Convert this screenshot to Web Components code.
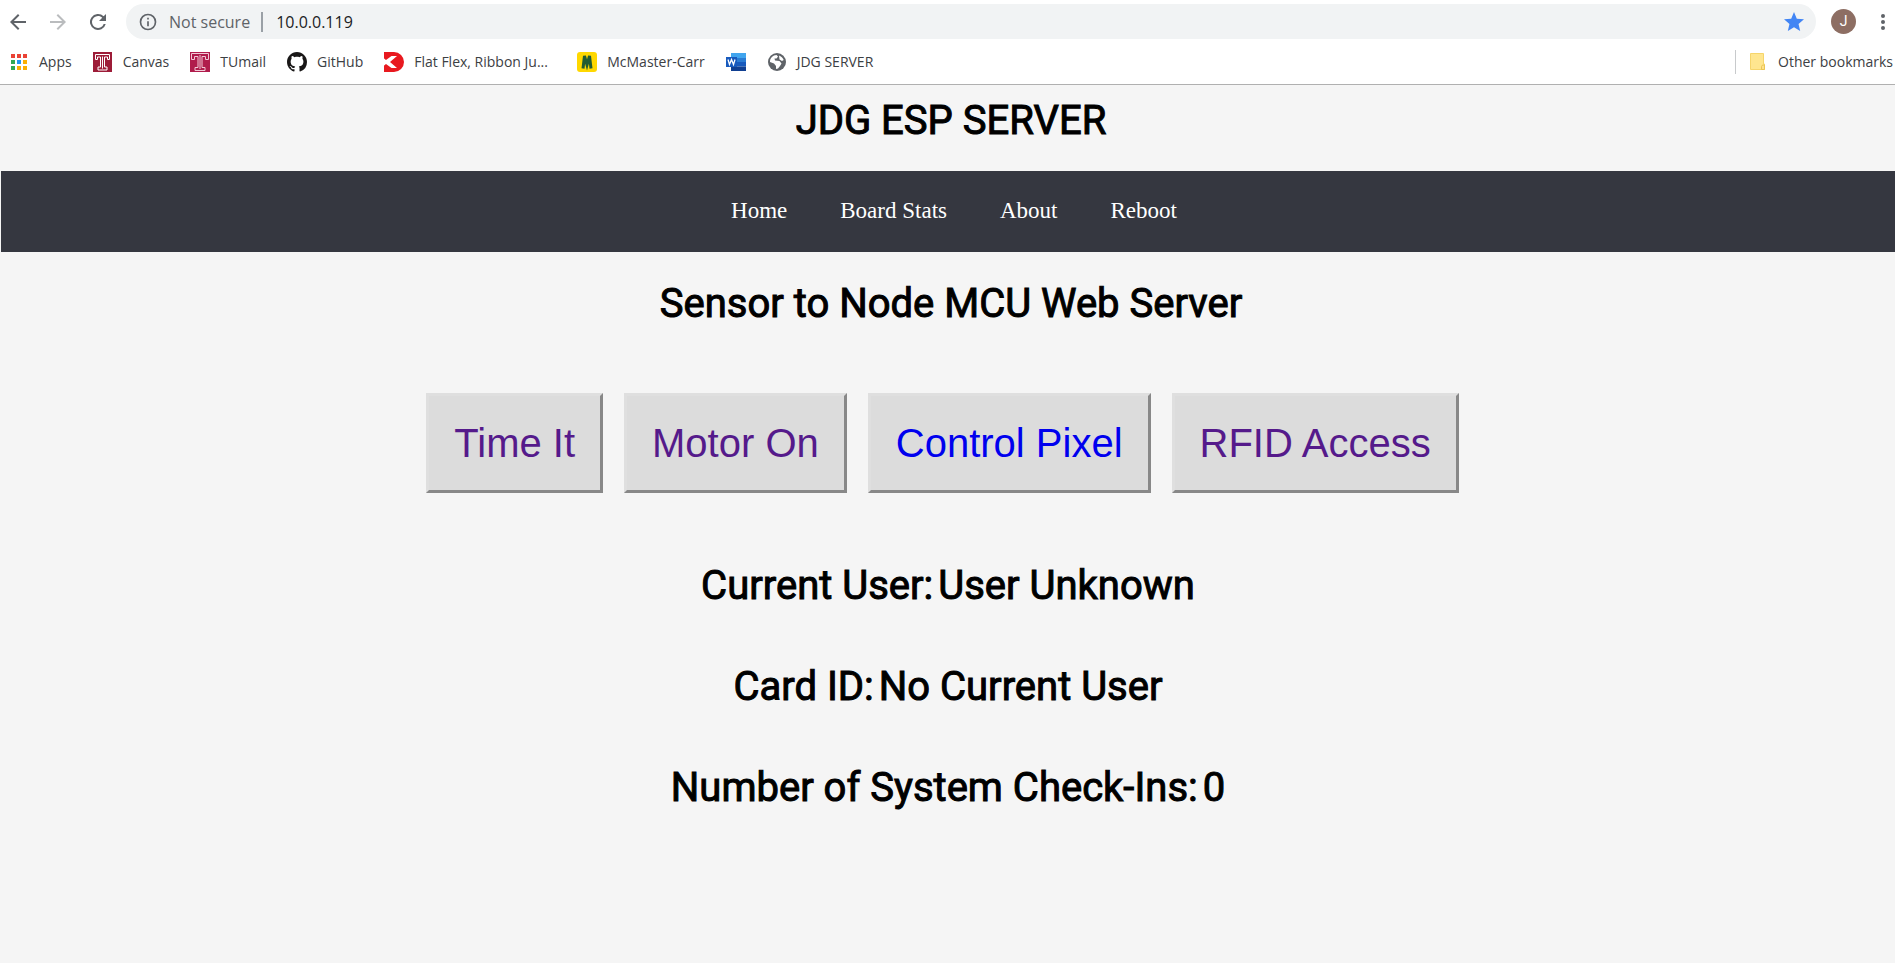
<!DOCTYPE html>
<html lang="en">
<head>
<meta charset="utf-8">
<title>JDG ESP SERVER</title>
<style>
html, body { height: 100%; margin: 0; }
body { background: #f5f5f5; }
</style>
</head>
<body>
<esp-app></esp-app>
<script>
const icons = {
  apps: '<svg viewBox="0 0 18 20"><g fill="#ea4335"><path d="M0 2h4v4H0zM6 2h4v4H6zM12 2h4v4h-4z"/></g><path fill="#34a853" d="M0 8h4v4H0zM0 14h4v4H0z"/><path fill="#2196f3" d="M6 8h4v4H6z"/><path fill="#fbb003" d="M12 8h4v4h-4zM6 14h4v4H6zM12 14h4v4h-4z"/></svg>',
  temple: '<svg viewBox="0 0 20 20"><path fill="#9d1c38" d="M0 0h19v20H0z"/><path fill="none" stroke="#fff" d="M2.500 7.500v-5h14v5h-2v-2.500h-3v10h2.500v3h-9v-3h2.500v-10h-3v2.500zM9.500 4.500v12"/></svg>',
  temple2: '<svg viewBox="0 0 20 20"><path fill="#b01c4c" d="M0 0h20v20H0z"/><path fill="none" stroke="#f1c9d6" d="M1.500 7.500v-6h17v6h-3v-3h-3.500v11h3v3H5v-3h3v-11H4.500v3zM10 3v14"/></svg>',
  github: '<svg viewBox="0 0 16 16"><path fill="#191717" d="M8 0C3.580 0 0 3.580 0 8c0 3.540 2.290 6.530 5.470 7.590.4.070.55-.17.55-.38 0-.19-.01-.82-.01-1.490-2.010.37-2.530-.49-2.690-.94-.09-.23-.48-.94-.82-1.130-.28-.15-.68-.52-.01-.53.63-.01 1.080.58 1.230.82.72 1.210 1.870.87 2.330.66.07-.52.28-.87.51-1.070-1.780-.2-3.640-.89-3.640-3.950 0-.87.31-1.590.82-2.150-.08-.2-.36-1.020.08-2.120 0 0 .67-.21 2.200.82.64-.18 1.320-.27 2-.27s1.360.09 2 .27c1.530-1.040 2.200-.82 2.200-.82.44 1.100.16 1.920.08 2.120.51.56.82 1.270.82 2.150 0 3.070-1.870 3.750-3.650 3.950.29.25.54.73.54 1.480 0 1.070-.01 1.930-.01 2.200 0 .21.15.46.55.38A8.010 8.010 0 0 0 16 8c0-4.420-3.580-8-8-8z"/></svg>',
  digikey: '<svg viewBox="0 0 20 20"><path fill="#e8191f" d="M0 0h10a10 10 0 0 1 0 20H0v-6.500L2 10 0 6.500z"/><path fill="#fff" d="M0 6.500L2 8l5.500-4H13l-7 6 7 6H7.500L2 12l-2 1.500z"/></svg>',
  mcmaster: '<svg viewBox="0 0 20 20"><rect width="20" height="20" rx="3" fill="#ffd800"/><path fill="none" stroke="#215b33" stroke-width="3" d="M6 16.500L7.500 4 10 13l2.500-9L14 16.500"/></svg>',
  word: '<svg viewBox="0 0 20 20"><path fill="#41a5ee" d="M5 1h15v5H5z"/><path fill="#2b7cd3" d="M5 6h15v4.500H5z"/><path fill="#185abd" d="M5 10h15v4.500H5z"/><path fill="#103f91" d="M5 14.500h15V19H5z"/><path fill="#185abd" d="M0 5h11v10H0z"/><path fill="none" stroke="#fff" stroke-width="1.300" d="M2 7.500l1.500 5 2-5 2 5 1.500-5"/></svg>',
  globe: '<svg viewBox="0 0 20 20"><circle cx="10" cy="10" r="9" fill="#5f6368"/><path fill="#fff" d="M3 9.500C3 6 6 3 9.500 3L11 4.500 9.500 6.500H7.500l.5 2 4.500.5 2 2.500-1.500 2.500-2 2.500-2 .5v-3l-2-2.500L3 10zM12 3.500c2 .5 4 2.500 4.700 4.500l-1.700 1-2.500-1.500z"/></svg>',
  folder: '<svg viewBox="0 0 20 20"><path fill="#ffe68f" stroke="#f6d56b" d="M2.500 1.500h13V12h1v5.500h-14z"/><path fill="#ffe08a" stroke="#eac655" d="M13.500 17.500v-3l1-1.500h2v4.500z"/></svg>',
  back: '<svg viewBox="0 0 24 24"><path fill="#5f6368" d="M20 11H7.830l5.590-5.590L12 4l-8 8 8 8 1.410-1.410L7.830 13H20z"/></svg>',
  forward: '<svg viewBox="0 0 24 24"><path fill="#babcbe" d="M12 4l-1.410 1.410L16.170 11H4v2h12.170l-5.580 5.590L12 20l8-8z"/></svg>',
  reload: '<svg viewBox="0 0 24 24"><path fill="#5f6368" d="M17.650 6.350A8 8 0 1 0 19.730 14h-2.080A6 6 0 1 1 12 6c1.660 0 3.140.69 4.220 1.780L13 11h7V4z"/></svg>',
  info: '<svg viewBox="0 0 24 24"><path fill="#5f6368" d="M11 17h2v-6h-2zm1-15a10 10 0 1 0 0 20 10 10 0 0 0 0-20zm0 18a8 8 0 1 1 0-16 8 8 0 0 1 0 16zM11 9h2V7h-2z"/></svg>',
  star: '<svg viewBox="0 0 24 24"><path fill="#4285f4" d="M12 17.270L18.180 21l-1.640-7.030L22 9.240l-7.190-.61L12 2 9.190 8.630 2 9.240l5.460 4.730L5.820 21z"/></svg>',
  more: '<svg viewBox="0 0 20 20"><g fill="#5f6368"><circle cx="10" cy="4" r="2"/><circle cx="10" cy="10" r="2"/><circle cx="10" cy="16" r="2"/></g></svg>'
};

const define = (name, css, html) => customElements.define(name, class extends HTMLElement {
  constructor() {
    super();
    this.attachShadow({ mode: 'open' });
  }
  connectedCallback() {
    this.shadowRoot.innerHTML = `<style>${css}</style>${typeof html === 'function' ? html(this) : html}`;
  }
});

define('ui-icon', `
:host { display: block; flex: none; width: 20px; height: 20px; }
:host([name="apps"]) { width: 18px; }
:host([large]) { width: 24px; height: 24px; }
svg { display: block; width: 100%; height: 100%; }
`, el => icons[el.getAttribute('name')]);

define('tool-button', `
:host { display: block; flex: none; }
button { display: block; padding: 0; border: 0; background: none; }
`, el => `<button aria-label="${el.getAttribute('label')}"><slot></slot></button>`);

define('browser-toolbar', `
:host { display: flex; align-items: center; height: 35px; padding: 4px 2px 0 6px; font: 16px/24px "Open Sans", sans-serif; }
.nav { display: flex; gap: 16px; margin-right: 16px; }
.box { flex: 1; display: flex; align-items: center; height: 35px; padding: 0 10px 0 12px; border-radius: 18px; background: #f1f3f4; box-sizing: border-box; }
.site { margin-left: 11px; color: #5f6368; white-space: nowrap; }
.rule { width: 2px; height: 20px; margin: 0 13px 0 11px; background: #9aa0a6; }
input { flex: 1; min-width: 0; padding: 0; border: 0; background: none; font: inherit; color: #202124; }
.avatar { display: block; width: 25px; height: 25px; margin: 0 17px 0 15px; border-radius: 50%; background: #8d6e63; color: #fff; font: 14px/25px Roboto, sans-serif; text-align: center; }
`, `
<div class="nav">
<tool-button label="Back"><ui-icon large name="back"></ui-icon></tool-button>
<tool-button label="Forward"><ui-icon large name="forward"></ui-icon></tool-button>
<tool-button label="Reload"><ui-icon large name="reload"></ui-icon></tool-button>
</div>
<div class="box"><ui-icon name="info"></ui-icon><span class="site">Not secure</span><span class="rule"></span>
<input aria-label="Address" value="10.0.0.119"><tool-button label="Edit bookmark"><ui-icon large name="star"></ui-icon></tool-button></div>
<tool-button label="Profile"><span class="avatar">J</span></tool-button>
<tool-button label="Menu"><ui-icon name="more"></ui-icon></tool-button>
`);

define('bookmark-link', `
:host { display: block; flex: none; }
a { display: flex; align-items: center; gap: 10px; height: 24px; color: #3c4043; text-decoration: none; white-space: nowrap; }
`, el => `<a href="#" aria-label="${el.getAttribute('label') || el.textContent}"><ui-icon name="${el.getAttribute('icon')}"></ui-icon><slot></slot></a>`);

define('bookmarks-bar', `
:host { display: flex; align-items: center; gap: 21px; height: 45px; padding: 0 2px 0 11px; border-bottom: 1px solid #b0b0b0; font: 14px/24px "Open Sans", sans-serif; }
.long { width: 172px; }
.other { margin-left: auto; padding-left: 12px; border-left: 1px solid #c8cacc; }
`, `
<bookmark-link icon="apps">Apps</bookmark-link>
<bookmark-link icon="temple">Canvas</bookmark-link>
<bookmark-link icon="temple2">TUmail</bookmark-link>
<bookmark-link icon="github">GitHub</bookmark-link>
<bookmark-link class="long" icon="digikey">Flat Flex, Ribbon Ju...</bookmark-link>
<bookmark-link icon="mcmaster">McMaster-Carr</bookmark-link>
<bookmark-link icon="word" label="Word"></bookmark-link>
<bookmark-link icon="globe">JDG SERVER</bookmark-link>
<bookmark-link class="other" icon="folder">Other bookmarks</bookmark-link>
`);

define('page-heading', `
:host { display: block; }
h1, h2 { margin: 0; font: 400 40px/48px Roboto, sans-serif; -webkit-text-stroke: 1px #000; color: #000; text-align: center; }
`, el => { const t = el.getAttribute('level') === '1' ? 'h1' : 'h2'; return `<${t}><slot></slot></${t}>`; });

define('site-nav', `
:host { display: block; background: #353740; }
nav { display: flex; justify-content: center; align-items: center; gap: 53px; height: 79px; padding: 0 0 2px 12px; }
a { color: #fff; text-decoration: none; font: 23px/26px "Liberation Serif", serif; }
`, `<nav><a href="#">Home</a><a href="#">Board Stats</a><a href="#">About</a><a href="#">Reboot</a></nav>`);

define('action-link', `
:host { display: block; }
a { display: block; padding: 25px; border: 3px solid; border-color: #dfdfdf #888 #888 #dfdfdf; background: #dcdcdc; color: #551a8b; font: 40px/44px "Liberation Sans", sans-serif; text-decoration: none; white-space: nowrap; }
:host([fresh]) a { color: #00e; }
`, `<a href="#"><slot></slot></a>`);

define('status-line', `
:host { display: flex; justify-content: center; gap: 5px; font: 400 40px/48px Roboto, sans-serif; -webkit-text-stroke: 1px #000; color: #000; }
`, el => `<span>${el.getAttribute('label')}:</span><slot></slot>`);

define('esp-app', `
:host { display: block; }
header { background: #fff; }
main { padding-left: 1px; }
.title { padding: 12px 0 26px 6px; }
.sub { padding: 28px 0 65px 6px; }
.actions { display: flex; justify-content: center; gap: 21px; padding-right: 11px; }
.status { display: grid; gap: 53px; padding: 69px 0; }
`, `
<header><browser-toolbar></browser-toolbar><bookmarks-bar></bookmarks-bar></header>
<main>
<page-heading class="title" level="1">JDG ESP SERVER</page-heading>
<site-nav></site-nav>
<page-heading class="sub" level="2">Sensor to Node MCU Web Server</page-heading>
<div class="actions"><action-link>Time It</action-link><action-link>Motor On</action-link><action-link fresh>Control Pixel</action-link><action-link>RFID Access</action-link></div>
<div class="status">
<status-line label="Current User">User Unknown</status-line>
<status-line label="Card ID">No Current User</status-line>
<status-line label="Number of System Check-Ins">0</status-line>
</div>
</main>
`);
</script>
</body>
</html>
